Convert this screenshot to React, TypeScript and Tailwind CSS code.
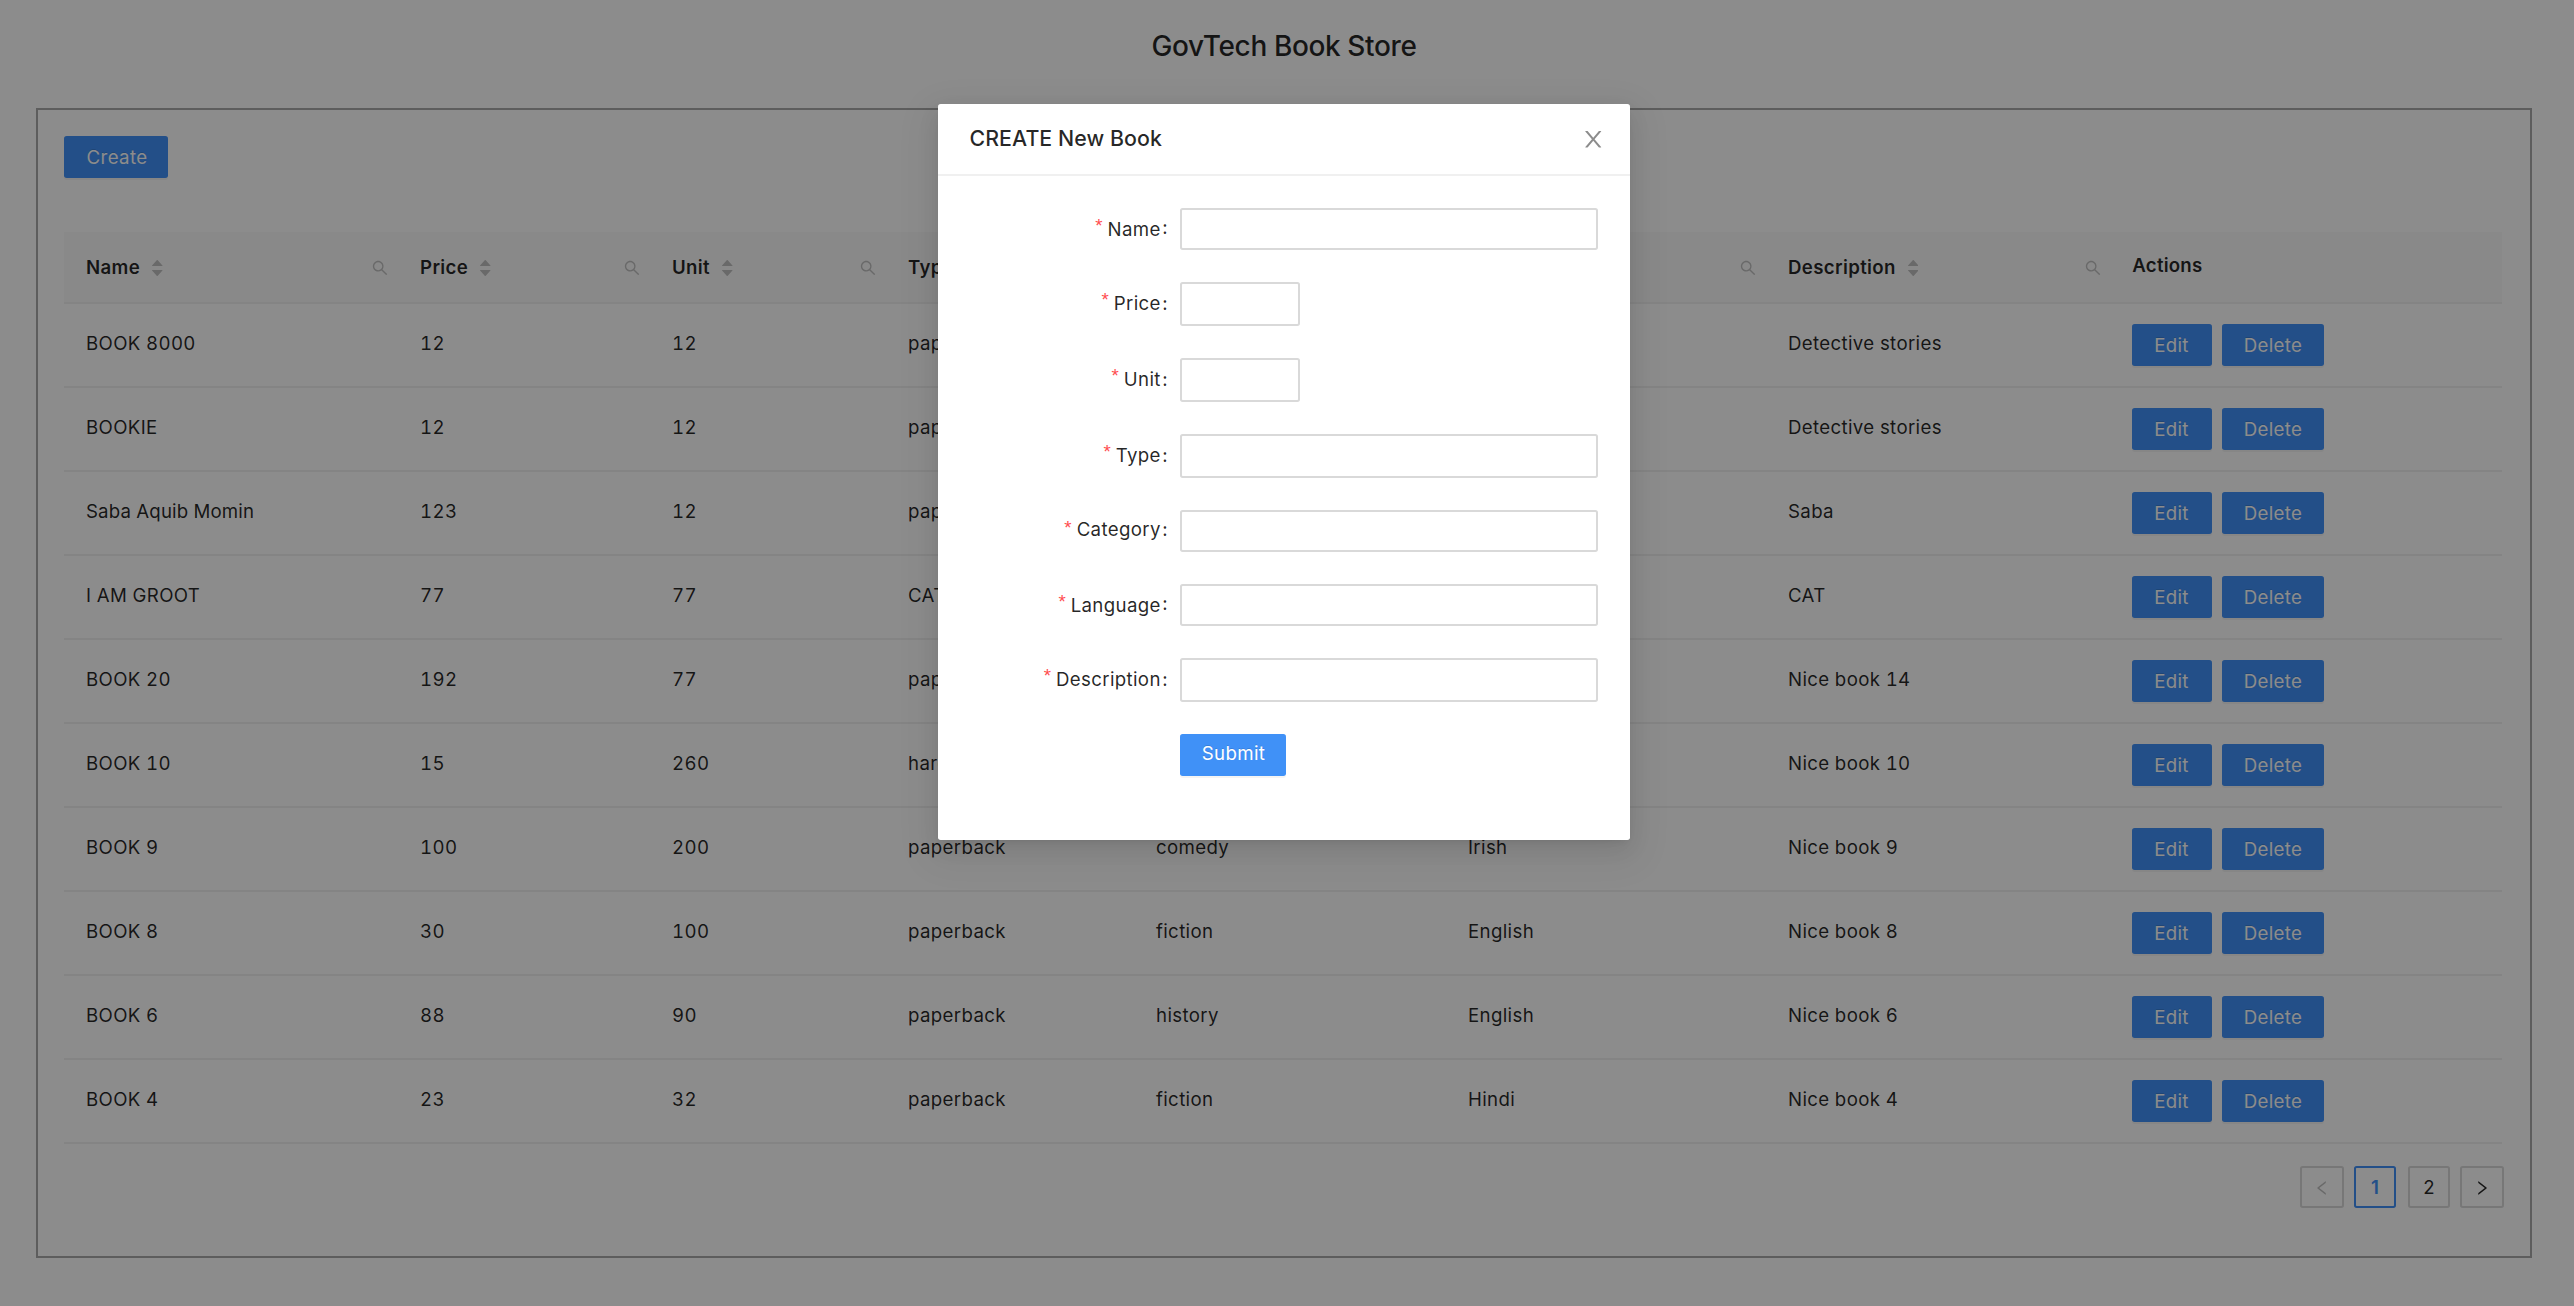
import type { ReactNode } from 'react'

const SEARCH =
  'M909.6 854.5L649.9 594.8C690.2 542.7 712 479 712 412c0-80.2-31.3-155.4-87.9-212.1-56.6-56.7-132-87.9-212.1-87.9s-155.5 31.3-212.1 87.9C143.2 256.5 112 331.8 112 412c0 80.1 31.3 155.5 87.9 212.1C256.5 680.8 331.8 712 412 712c67 0 130.6-21.8 182.7-62l259.7 259.6a8.2 8.2 0 0011.6 0l43.6-43.5a8.2 8.2 0 000-11.6zM570.4 570.4C528 612.7 471.8 636 412 636s-116-23.3-158.4-65.6C211.3 528 188 471.8 188 412s23.3-116.1 65.6-158.4C296 211.3 352.2 188 412 188s116.1 23.2 158.4 65.6S636 352.2 636 412s-23.3 116.1-65.6 158.4z'
const CLOSE =
  'M563.8 512l262.5-312.9c4.4-5.2.7-13.1-6.1-13.1h-79.8c-4.7 0-9.2 2.1-12.3 5.7L511.6 449.8 295.1 191.7c-3-3.6-7.5-5.7-12.3-5.7H203c-6.8 0-10.5 7.9-6.1 13.1L459.4 512 196.9 824.9A7.95 7.95 0 00203 838h79.8c4.7 0 9.2-2.1 12.3-5.7l216.5-258.1 216.5 258.1c3 3.6 7.5 5.7 12.3 5.7h79.8c6.8 0 10.5-7.9 6.1-13.1L563.8 512z'
const LEFT =
  'M724 218.3V141c0-6.7-7.7-10.4-12.9-6.3L260.3 486.8a31.86 31.86 0 000 50.3l450.8 352.1c5.3 4.1 12.9.4 12.9-6.3v-77.3c0-4.9-2.3-9.6-6.1-12.6l-360-281 360-281.1c3.8-3 6.1-7.7 6.1-12.6z'
const RIGHT =
  'M765.7 486.8L314.9 134.7A7.97 7.97 0 00302 141v77.3c0 4.9 2.3 9.6 6.1 12.6l360 281.1-360 281.1c-3.9 3-6.1 7.7-6.1 12.6V883c0 6.7 7.7 10.4 12.9 6.3l450.8-352.1a31.96 31.96 0 000-50.4z'
const CARET_UP =
  'M858.9 689L530.5 308.2c-9.4-10.9-27.5-10.9-37 0L165.1 689c-12.2 14.2-1.2 35 18.5 35h656.8c19.7 0 30.7-20.8 18.5-35z'
const CARET_DOWN =
  'M840.4 300H183.6c-19.7 0-30.7 20.8-18.5 35l328.4 380.8c9.4 10.9 27.5 10.9 37 0L858.9 335c12.2-14.2 1.2-35-18.5-35z'

function Icon({ d, className }: { d: string; className: string }) {
  return (
    <svg viewBox="64 64 896 896" fill="currentColor" className={className}>
      <path d={d} />
    </svg>
  )
}

function Sorter() {
  return (
    <span className="ml-3 flex flex-col gap-1 pt-0.5 text-[#bfbfbf]">
      <svg viewBox="160 300 704 424" fill="currentColor" preserveAspectRatio="none" className="h-1.5 w-[10.5px]">
        <path d={CARET_UP} />
      </svg>
      <svg viewBox="160 300 704 424" fill="currentColor" preserveAspectRatio="none" className="h-1.5 w-[10.5px]">
        <path d={CARET_DOWN} />
      </svg>
    </span>
  )
}

function Button({ children, className }: { children: ReactNode; className: string }) {
  return (
    <button
      className={`flex h-[42px] items-center justify-center rounded-[2.67px] bg-[#4091f7] text-white shadow-[0_2px_0_rgba(0,0,0,0.045)] [text-shadow:0_-1px_0_rgba(0,0,0,0.12)] ${className}`}
    >
      {children}
    </button>
  )
}

const COLUMNS = ['Name', 'Price', 'Unit', 'Type', 'Category', 'Language', 'Description']

const BOOKS = [
  ['BOOK 8000', '12', '12', 'paperback', 'fiction', 'English', 'Detective stories'],
  ['BOOKIE', '12', '12', 'paperback', 'fiction', 'English', 'Detective stories'],
  ['Saba Aquib Momin', '123', '12', 'paperback', 'fiction', 'English', 'Saba'],
  ['I AM GROOT', '77', '77', 'CAT', 'CAT', 'CAT', 'CAT'],
  ['BOOK 20', '192', '77', 'paperback', 'fiction', 'English', 'Nice book 14'],
  ['BOOK 10', '15', '260', 'hardcover', 'fiction', 'English', 'Nice book 10'],
  ['BOOK 9', '100', '200', 'paperback', 'comedy', 'Irish', 'Nice book 9'],
  ['BOOK 8', '30', '100', 'paperback', 'fiction', 'English', 'Nice book 8'],
  ['BOOK 6', '88', '90', 'paperback', 'history', 'English', 'Nice book 6'],
  ['BOOK 4', '23', '32', 'paperback', 'fiction', 'Hindi', 'Nice book 4'],
]

const GRID = 'grid grid-cols-[334px_252px_236px_248px_312px_320px_345px_1fr] border-b-2 border-[#f0f0f0]'

function BookTable() {
  return (
    <div className="w-[2438px] tabular-nums">
      <div className={`${GRID} h-[72px] bg-[#fafafa] font-[560]`}>
        {COLUMNS.map((c) => (
          <div key={c} className="flex items-center pr-2.5 pl-[22px]">
            <span>{c}</span>
            <Sorter />
            <Icon d={SEARCH} className="mt-0.5 ml-auto size-4 text-[#bfbfbf]" />
          </div>
        ))}
        <div className="flex items-center pb-1 pl-[21.33px] tracking-[0.2px]">Actions</div>
      </div>
      {BOOKS.map((row) => (
        <div key={row[0]} className={`${GRID} h-[84px]`}>
          {row.map((cell, i) => (
            <div
              key={i}
              className={`flex items-center pb-1 pl-[22px] ${i === 0 && cell.length > 12 ? 'tracking-[0.15px]' : 'tracking-[0.35px]'}`}
            >
              {cell}
            </div>
          ))}
          <div className="flex items-center gap-2.5 pl-[21px]">
            <Button className="w-20 pr-px">Edit</Button>
            <Button className="w-[102px]">Delete</Button>
          </div>
        </div>
      ))}
    </div>
  )
}

function Pagination() {
  const box = 'flex h-[42px] items-center justify-center rounded-[2.67px] border-2'
  return (
    <div className="mt-[22px] flex justify-end">
      <button className={`${box} w-11 border-[#d9d9d9] pt-0.5 text-black/25`}>
        <Icon d={LEFT} className="size-4" />
      </button>
      <button className={`${box} ml-2.5 w-[42px] border-[#4091f7] font-[560] text-[#4091f7]`}>1</button>
      <button className={`${box} ml-3 w-[42px] border-[#d9d9d9]`}>2</button>
      <button className={`${box} ml-2.5 w-11 border-[#d9d9d9] pt-0.5`}>
        <Icon d={RIGHT} className="size-4" />
      </button>
    </div>
  )
}

const FIELDS = [
  { label: 'Name', input: 'h-[42px] w-[418px]', text: '', colon: '-translate-y-0.5' },
  { label: 'Price', input: 'h-11 w-[120px]', text: '', colon: '' },
  { label: 'Unit', input: 'h-11 w-[120px]', text: '', colon: '' },
  { label: 'Type', input: 'h-11 w-[418px]', text: '', colon: '' },
  { label: 'Category', input: 'h-[42px] w-[418px]', text: '-translate-y-0.5', colon: '-translate-y-0.5' },
  { label: 'Language', input: 'h-[42px] w-[418px]', text: '', colon: '-translate-y-0.5' },
  { label: 'Description', input: 'h-11 w-[418px]', text: '', colon: '' },
]

function CreateBookModal() {
  return (
    <div className="h-[736px] w-[692px] rounded-[2.67px] bg-white shadow-[0_4px_8px_-5px_rgba(0,0,0,0.12),0_8px_21px_0_rgba(0,0,0,0.08),0_12px_37px_11px_rgba(0,0,0,0.05)]">
      <div className="flex h-[72px] items-center justify-between border-b-2 border-[#f0f0f0] pr-[26px] pl-[31.5px]">
        <h2 className="pb-0.5 text-[21.33px] font-[550] tracking-[0.07px]">CREATE New Book</h2>
        <Icon d={CLOSE} className="size-[22.5px] text-black/45" />
      </div>
      <form className="flex flex-col gap-8 pt-8">
        {FIELDS.map((f) => (
          <div key={f.label} className="flex">
            <label className="flex h-[42px] w-[242px] items-center justify-end pr-3">
              <span className="mr-[5px] -translate-y-1 font-['Liberation_Sans',sans-serif] font-normal tracking-normal text-[#ff4d4f]">*</span>
              <span className={f.text}>{f.label}</span>
              <span className={`ml-[1.5px] ${f.colon}`}>:</span>
            </label>
            <input className={`rounded-[2.67px] border-2 border-[#d9d9d9] bg-white ${f.input}`} />
          </div>
        ))}
        <Button className="ml-[242px] w-[106px] pb-1 pl-px">Submit</Button>
      </form>
    </div>
  )
}

export default function App() {
  return (
    <div className="relative h-[1306px] w-full overflow-hidden bg-white font-['Inter',sans-serif] text-[18.67px] leading-[29px] font-[430] tracking-[0.35px] text-black/85">
      <div className="pr-[42px] pl-9">
        <h1 className="mb-4 flex h-[92px] items-center justify-center text-[28px] font-[530] tracking-[-0.38px]">
          GovTech Book Store
        </h1>
        <div className="h-[1150px] border-2 border-[#a9a9a9] p-[26px]">
          <Button className="mb-[54px] w-[104px] pl-0.5">Create</Button>
          <BookTable />
          <Pagination />
        </div>
      </div>
      <div className="absolute inset-0 flex items-start bg-black/45 pt-[104px] pl-[938px]">
        <CreateBookModal />
      </div>
    </div>
  )
}
